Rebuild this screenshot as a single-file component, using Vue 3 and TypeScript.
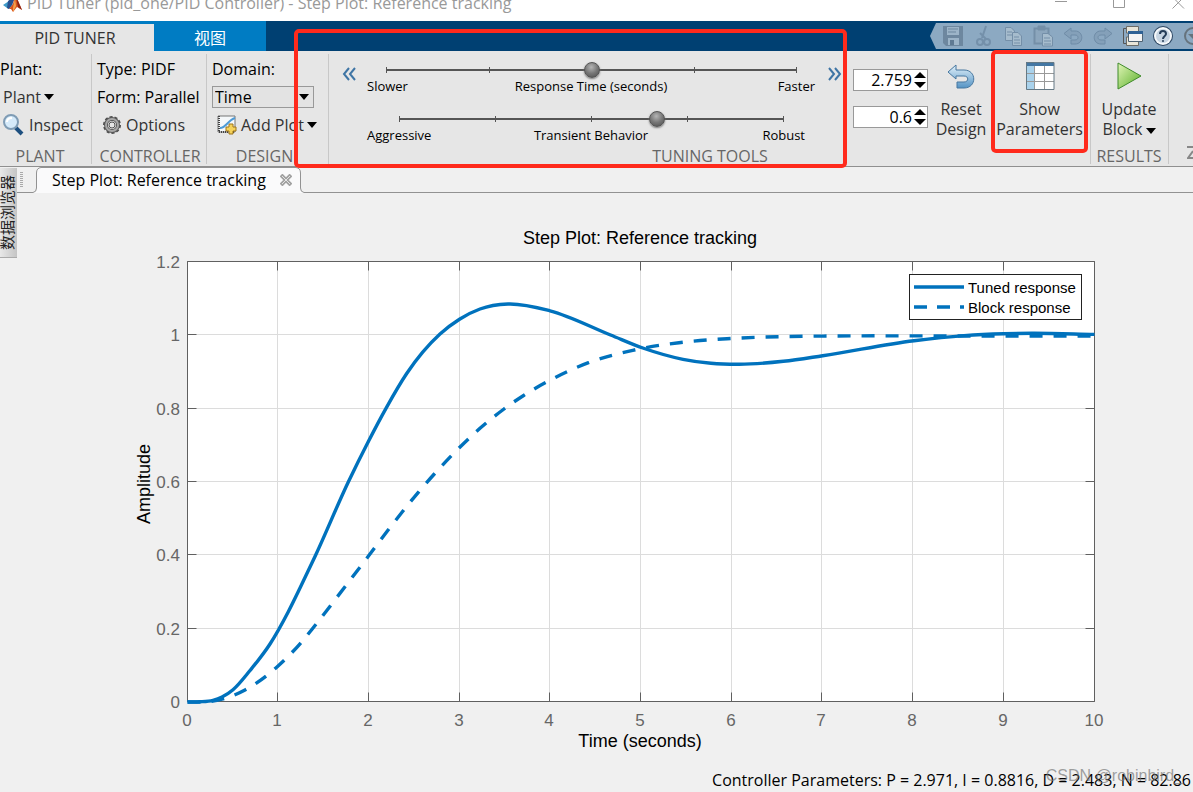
<script setup lang="ts">
import { ref } from 'vue'

type Point = [number, number]

const responseTime = ref('2.759')
const transient = ref('0.6')
const responsePos = ref(50)
const transientPos = ref(67)
const domain = ref('Time')

const axes = { left: 187, right: 1094, top: 261, bottom: 701 }
const xTicks = Array.from({ length: 11 }, (_, i) => ({
  label: String(i),
  x: Math.floor(axes.left + ((axes.right - axes.left) * i) / 10),
}))
const yTicks = ['0', '0.2', '0.4', '0.6', '0.8', '1', '1.2'].map((label, i) => ({
  label,
  y: Math.round(axes.bottom - ((axes.bottom - axes.top) * i) / 6),
}))

const tuned: Point[] = [
  [187.5, 702], [200, 701.8], [213, 700.3], [222, 697], [233, 689.7], [250, 670.5], [270, 644],
  [288.3, 611.7], [300, 588], [315, 556.5], [348.3, 482], [368.5, 441.2], [386, 408.3], [406.7, 373.5],
  [440, 334], [459.5, 319.2], [480, 309], [508, 304], [550, 310.8], [610.6, 335], [642.8, 348],
  [683, 359.3], [711, 363.3], [739, 364.3], [783.4, 361.3], [822.7, 355.7], [914, 340.7],
  [964, 335.6], [1004, 333.7], [1032, 333.3], [1094.5, 334.4],
]
const block: Point[] = [
  [187.5, 702], [210, 701.5], [222, 699.2], [245, 690], [276.7, 667.2], [300, 643.8], [315, 625.5],
  [345, 586.7], [368.3, 556.3], [388.3, 529.8], [418.3, 492.3], [434.3, 474], [459.3, 447.7],
  [480, 428.3], [504, 409], [524, 395.2], [550.4, 380], [588.5, 362.7], [632.7, 350.3],
  [679, 342.7], [727, 338.7], [779.5, 336.7], [831.6, 336], [960, 336], [1094.5, 336],
]

// Hermite interpolation; each tangent weights the two adjoining chords by distance.
function curve(points: Point[]): string {
  const last = points.length - 1
  const chord = (i: number) => (points[i + 1][1] - points[i][1]) / (points[i + 1][0] - points[i][0])
  const slope = points.map((p, i) => {
    if (i === 0) return chord(0)
    if (i === last) return chord(last - 1)
    const h0 = p[0] - points[i - 1][0]
    const h1 = points[i + 1][0] - p[0]
    return (h1 * chord(i - 1) + h0 * chord(i)) / (h0 + h1)
  })
  let d = `M${points[0][0]} ${points[0][1]}`
  for (let i = 1; i <= last; i++) {
    const [x0, y0] = points[i - 1]
    const [x1, y1] = points[i]
    const h = (x1 - x0) / 3
    d += `C${x0 + h} ${y0 + slope[i - 1] * h} ${x1 - h} ${y1 - slope[i] * h} ${x1} ${y1}`
  }
  return d
}
const tunedPath = curve(tuned)
const blockPath = curve(block)
</script>

<template>
  <div class="page">
    <header class="titlebar">
      <svg class="logo" width="20" height="13" viewBox="0 0 20 13">
        <path d="M0 5 6 1 10 4 6 9 4 8Z" fill="#3e9bc8" />
        <path d="M5 1 9-2 12-2 9 5 6 9 4 8Z" fill="#28508e" />
        <path d="M12-4 14-2 19 10 14 7 10 12 8 9 6 9 10 4Z" fill="#d9541e" />
        <path d="M13-3 15 1 19 10 15 7Z" fill="#8a2418" />
        <path d="M12-2 13 6 10 12 10 8Z" fill="#f3a14b" />
      </svg>
      <span class="title">PID Tuner (pid_one/PID Controller) - Step Plot: Reference tracking</span>
      <svg class="winbtns" width="132" height="10" viewBox="0 0 132 10" fill="none" stroke="#999">
        <path d="M2 1.500H14M60.500 -4V7.500H71.500V-4M119.500 8.500 131 -3M119.500 -3 131 8.500" />
      </svg>
    </header>

    <nav class="tabs">
      <a href="#tuner" class="tab active">PID TUNER</a>
      <a href="#view" class="tab">视图</a>
      <div class="quick">
        <svg class="point" width="8" height="26" viewBox="0 0 8 26"><path d="M8 0H6L0 13 6 26H8Z" fill="#8ca9c2" /></svg>
        <div class="quick-icons">
          <button aria-label="Save">
            <svg width="22" height="22" viewBox="0 0 22 22"><path d="M1 1H21V21H4L1 18Z" fill="#6d879f" /><path d="M5 2H17V10H5Z" fill="#9cb4c8" /><path d="M6 4H16M6 7H14" stroke="#6d879f" stroke-width="1" /><path d="M6 13H17V20H6Z" fill="#9cb4c8" /><path d="M8 15H12V20H8Z" fill="#5f7a93" /></svg>
          </button>
          <button aria-label="Cut">
            <svg width="22" height="22" viewBox="0 0 22 22" fill="none" stroke="#7490aa" stroke-width="2"><path d="M14 1 10 13M8 8 14 14" /><circle cx="8" cy="17" r="3" /><circle cx="15" cy="17" r="3" /></svg>
          </button>
          <button aria-label="Copy">
            <svg width="22" height="22" viewBox="0 0 22 22" fill="#a6bccd" stroke="#748fa8"><path d="M3.500 2.500H9L12.500 6V15.500H3.500Z" /><path d="M5 7H10M5 10H10" /><path d="M10.500 7.500H16L19.500 11V20.500H10.500Z" /><path d="M12 12H17M12 15H18M12 18H18" /></svg>
          </button>
          <button aria-label="Paste">
            <svg width="22" height="22" viewBox="0 0 22 22" fill="#a6bccd" stroke="#748fa8"><path d="M2.500 3.500H16.500V18.500H2.500Z" fill="#8ca6bd" stroke-width="2" /><path d="M6 1H13V5H6Z" fill="#748fa8" /><path d="M10.500 8.500H16L20.500 12V21H10.500Z" /><path d="M12 13H18M12 16H19M12 19H19" /></svg>
          </button>
          <button aria-label="Undo">
            <svg width="22" height="22" viewBox="0 0 22 22" fill="none" stroke="#6f8ca7"><path d="M2 8.500 9 3V6H13C22 6 22 19 13 19H9V15H13C17 15 17 10 13 10H9V14Z" stroke-width="1" fill="#84a0b9" /></svg>
          </button>
          <button aria-label="Redo">
            <svg width="22" height="22" viewBox="0 0 22 22" fill="none" stroke="#6f8ca7"><path d="M20 8.500 13 3V6H9C0 6 0 19 9 19H13V15H9C5 15 5 10 9 10H13V14Z" stroke-width="1" fill="#84a0b9" /></svg>
          </button>
          <button aria-label="Switch windows">
            <svg width="22" height="22" viewBox="0 0 22 22"><path d="M4.500 1.500H16.500V8H4.500ZM4.500 12H16.500V20.500H4.500Z" fill="#e9e5d8" stroke="#6b6b66" /><path d="M4 3.500H1.500V18.500H4" fill="none" stroke="#555" /><path d="M6.500 6.500H20.500V16.500H6.500Z" fill="#f4f4f4" stroke="#4f6272" /><path d="M6 6H21V9H6Z" fill="#2f6295" /></svg>
          </button>
          <button aria-label="Help">
            <svg width="22" height="22" viewBox="0 0 22 22"><circle cx="11" cy="11" r="10" fill="#2d4763" /><circle cx="11" cy="11" r="9" fill="#f6f9fb" /><circle cx="11" cy="11" r="7" fill="#c7d5e2" /><path d="M8 9C8 5 14 5 14 9 14 11 11 11 11 14" fill="none" stroke="#263e59" stroke-width="2" /><circle cx="11" cy="16" r="1" fill="#263e59" /></svg>
          </button>
          <button aria-label="More">
            <svg width="22" height="22" viewBox="0 0 22 22"><circle cx="11" cy="11" r="8" fill="none" stroke="#66737d" stroke-width="2" /><path d="M6 9H16L11 14Z" fill="#66737d" /></svg>
          </button>
        </div>
      </div>
    </nav>

    <section class="ribbon">
      <div class="group plant">
        <div class="rows">
          <div class="row dark">Plant:</div>
          <button class="row indent">Plant<i class="caret"></i></button>
          <button class="row indent">
            <svg width="22" height="22" viewBox="0 0 22 22"><path d="M12 13 19 20" stroke="#1d4f7f" stroke-width="4" /><circle cx="8" cy="8" r="7" fill="#d5eafa" stroke="#7f9cb5" stroke-width="2" /><path d="M4 8C4 5 6 4 9 4" fill="none" stroke="#fff" stroke-width="2" /></svg>
            <span>Inspect</span>
          </button>
        </div>
        <h2>PLANT</h2>
      </div>
      <div class="group controller">
        <div class="rows">
          <div class="row dark">Type: PIDF</div>
          <div class="row dark">Form: Parallel</div>
          <button class="row icon-row">
            <svg width="20" height="20" viewBox="0 0 20 20"><circle cx="10" cy="10" r="8" fill="none" stroke="#4c4c4c" stroke-width="2" stroke-dasharray="3 2" /><circle cx="10" cy="10" r="6" fill="none" stroke="#5a5a5a" stroke-width="4" /><circle cx="10" cy="10" r="6" fill="none" stroke="#a8a8a8" stroke-width="2" /><circle cx="10" cy="10" r="3" fill="#e6e6e6" stroke="#555" stroke-width="1" /></svg>
            <span>Options</span>
          </button>
        </div>
        <h2>CONTROLLER</h2>
      </div>
      <div class="group design">
        <div class="rows">
          <label class="row dark" for="domain">Domain:</label>
          <div class="row select-row">
            <select id="domain" v-model="domain"><option>Time</option><option>Frequency</option></select>
            <i class="caret"></i>
          </div>
          <button class="row icon-row">
            <svg width="20" height="20" viewBox="0 0 20 20"><path d="M1 1H18V17H1Z" fill="#f5f8fa" stroke="#777" /><path d="M2 1V17H18" fill="none" stroke="#444" stroke-width="2" stroke-dasharray="1 1" /><path d="M3 13C9 13 11 5 18 3" fill="none" stroke="#4d9ad6" stroke-width="2" /><path d="M12 9H16V12H19V16H16V19H12V16H9V12H12Z" fill="#f5d25a" stroke="#9d7418" /></svg>
            <span>Add Plot</span><i class="caret"></i>
          </button>
        </div>
        <h2>DESIGN</h2>
      </div>
      <div class="group tuning">
        <div class="tools">
          <button class="chev" aria-label="Shift range slower">
            <svg width="14" height="14" viewBox="0 0 14 14" fill="none" stroke="#3f75a5" stroke-width="2"><path d="M7 1 2 7 7 13M13 1 8 7 13 13" /></svg>
          </button>
          <div class="sliders">
            <div class="slider first">
              <div class="track">
                <div class="ticks"><i v-for="n in 5" :key="n"></i></div>
                <input v-model="responsePos" type="range" min="0" max="100" aria-label="Response Time (seconds)" />
              </div>
              <div class="labels"><span>Slower</span><span>Response Time (seconds)</span><span>Faster</span></div>
            </div>
            <div class="slider second">
              <div class="track">
                <div class="ticks"><i v-for="n in 5" :key="n"></i></div>
                <input v-model="transientPos" type="range" min="0" max="100" aria-label="Transient Behavior" />
              </div>
              <div class="labels"><span>Aggressive</span><span>Transient Behavior</span><span>Robust</span></div>
            </div>
          </div>
          <button class="chev" aria-label="Shift range faster">
            <svg width="14" height="14" viewBox="0 0 14 14" fill="none" stroke="#3f75a5" stroke-width="2"><path d="M1 1 6 7 1 13M7 1 12 7 7 13" /></svg>
          </button>
          <div class="spinners">
            <div class="spinner">
              <input v-model="responseTime" type="text" aria-label="Response time" />
              <div class="arrows"><button class="up" aria-label="Increase response time"></button><button class="down" aria-label="Decrease response time"></button></div>
            </div>
            <div class="spinner">
              <input v-model="transient" type="text" aria-label="Transient behavior value" />
              <div class="arrows"><button class="up" aria-label="Increase transient behavior"></button><button class="down" aria-label="Decrease transient behavior"></button></div>
            </div>
          </div>
          <button class="big reset">
            <svg width="30" height="30" viewBox="0 0 30 30"><defs><linearGradient id="arrow" x2="0" y2="1"><stop stop-color="#e4f3fc" /><stop offset="1" stop-color="#5493c4" /></linearGradient></defs><path d="M2 11 10 4V9H18C31 9 31 27 18 27H11V21H18C23 21 23 15 18 15H10V18Z" fill="url(#arrow)" stroke="#47779f" stroke-width="1" /></svg>
            <span>Reset</span><span>Design</span>
          </button>
          <button class="big params">
            <svg width="30" height="30" viewBox="0 0 30 30"><path d="M1 2H29V29H1Z" fill="#fff" /><path d="M1 5H9V29H1Z" fill="#a9d2ec" /><path d="M1 1H29V5H1Z" fill="#4477a3" /><path d="M9.500 5V28M19.500 5V28M1 12.500H29M1 20.500H29" stroke="#999" /><path d="M1.500 1.500H29V28.500H1.500Z" fill="none" stroke="#657985" /></svg>
            <span>Show</span><span>Parameters</span>
          </button>
        </div>
        <h2>TUNING TOOLS</h2>
      </div>
      <div class="group results">
        <div class="tools">
          <button class="big">
            <svg width="30" height="30" viewBox="0 0 30 30"><defs><linearGradient id="play" x2="1" y2="1"><stop stop-color="#e2f6b8" /><stop offset="1" stop-color="#58ae27" /></linearGradient></defs><path d="M4 2 27 15 4 28Z" fill="url(#play)" stroke="#3f8a2b" stroke-width="1" stroke-linejoin="round" /></svg>
            <span>Update</span><span>Block<i class="caret"></i></span>
          </button>
        </div>
        <h2>RESULTS</h2>
      </div>
      <div class="rest">
        <svg width="6" height="14" viewBox="0 0 6 14"><path d="M0 1H6M6 5 1 12H6" fill="none" stroke="#888" stroke-width="2" /></svg>
      </div>
    </section>
    <div class="mark mark-tuning"></div>

    <main class="workspace">
      <button class="side"><span>数据浏览器</span></button>
      <div class="document">
        <div class="doc-tabs">
          <div class="grip"><i></i></div>
          <svg width="8" height="26" viewBox="0 0 8 26"><path d="M0 25.500Q3.500 25 3.500 21V6Q3.500 1 8 .5V26H0Z" fill="#fafafb" /><path d="M0 25.500Q3.500 25 3.500 21V6Q3.500 1 8 .5" fill="none" stroke="#929292" /></svg>
          <div class="doc-tab">
            <span>Step Plot: Reference tracking</span>
            <button aria-label="Close">
              <svg width="12" height="12" viewBox="0 0 12 12"><path d="M1 1 11 11M11 1 1 11" stroke="#a2a2a2" stroke-width="4" /><path d="M2 2 10 10M10 2 2 10" stroke="#e4e4e4" stroke-width="1" /></svg>
            </button>
          </div>
          <svg width="8" height="26" viewBox="0 0 8 26"><path d="M8 25.500Q4.500 25 4.500 21V6Q4.500 1 0 .5V26H8Z" fill="#fafafb" /><path d="M8 25.500Q4.500 25 4.500 21V6Q4.500 1 0 .5" fill="none" stroke="#929292" /></svg>
          <div class="filler"></div>
        </div>

        <svg class="chart" viewBox="17 193 1176 576" role="img" aria-label="Step plot of tuned and block response">
          <rect x="187" y="261" width="908" height="441" fill="#fff" />
          <g transform="translate(.5 .5)">
            <g class="grid">
              <path v-for="t in xTicks" :key="'gx' + t.label" :d="`M${t.x} 261V701`" />
              <path v-for="t in yTicks" :key="'gy' + t.label" :d="`M187 ${t.y}H1094`" />
            </g>
            <g class="axis">
              <path v-for="t in xTicks" :key="'ax' + t.label" :d="`M${t.x} 261V270M${t.x} 701V692`" />
              <path v-for="t in yTicks" :key="'ay' + t.label" :d="`M187 ${t.y}H196M1094 ${t.y}H1085`" />
              <path d="M187 261H1094V701H187Z" />
            </g>
          </g>
          <path class="line dashed" :d="blockPath" />
          <path class="line" :d="tunedPath" />
          <g class="tick-text">
            <text v-for="t in xTicks" :key="'tx' + t.label" :x="t.x" y="726" text-anchor="middle">{{ t.label }}</text>
            <text v-for="t in yTicks" :key="'ty' + t.label" x="180" :y="t.y + 7" text-anchor="end">{{ t.label }}</text>
          </g>
          <text class="heading" x="640" y="244" text-anchor="middle">Step Plot: Reference tracking</text>
          <text class="heading" x="640" y="747" text-anchor="middle">Time (seconds)</text>
          <text class="heading" transform="translate(150 484) rotate(-90)" text-anchor="middle">Amplitude</text>
          <rect class="legend" x="909" y="274" width="172" height="45" />
          <path class="line" d="M914 287H964" />
          <path class="line legend-dash" d="M914 307H964" />
          <text class="legend-text" x="968" y="293">Tuned response</text>
          <text class="legend-text" x="968" y="313">Block response</text>
        </svg>
      </div>
    </main>
    <footer class="status">
      <span>Controller Parameters: P = 2.971, I = 0.8816, D = 2.483, N = 82.86</span>
      <span class="watermark">CSDN @robinbird_</span>
    </footer>
  </div>
</template>

<style>
body { margin: 0; background: #f0f0f0; }
</style>

<style scoped>
.page { position: relative; min-height: 100vh; overflow: hidden; display: flex; flex-direction: column; background: #f0f0f0; color: #333; font: 16px/20px "Open Sans", "Noto Sans CJK SC", sans-serif; }
* { box-sizing: border-box; }
svg { display: block; flex: none; }
button { border: 0; padding: 0; margin: 0; background: none; font: inherit; color: inherit; }
.titlebar { height: 21px; background: #fff; display: flex; align-items: flex-start; padding: 0 8px 0 3px; overflow: hidden; }
.title { margin-left: 4px; line-height: 6px; color: #999; white-space: nowrap; }
.winbtns { margin-left: auto; }
.tabs { height: 30px; display: flex; background: #004072; }
.tab { width: 112px; display: flex; align-items: center; justify-content: center; padding-top: 4px; background: #007cc3; color: #fff; text-decoration: none; }
.tab.active { width: 154px; padding: 3px 4px 0 0; color: #333; background: linear-gradient(#007cc3 3px, #e6e6e6 3px); }
.quick { margin-left: auto; padding-top: 2px; display: flex; width: 263px; overflow: hidden; }
.quick-icons { height: 26px; flex: 1; display: flex; background: #8ca9c2; overflow: hidden; }
.quick-icons button { flex: none; width: 30px; display: grid; place-items: center; }
.ribbon { height: 116px; display: flex; background: #e6e6e6; border-bottom: 1px solid #8f8f8f; }
.group { position: relative; display: flex; flex-direction: column; background: linear-gradient(#c8c8c8, #c8c8c8) right 0 top 3px / 1px 110px no-repeat; }
.plant { width: 92px; }
.controller { width: 115px; padding-left: 5px; }
.design { width: 122px; padding-left: 5px; }
.tuning { flex: 1; }
.results { width: 78px; }
.rest { width: 24px; padding-top: 95px; display: flex; justify-content: flex-end; }
h2 { flex: none; height: 20px; margin: auto 0 0; font-size: 16px; line-height: 20px; font-weight: 400; color: #666; text-align: center; white-space: nowrap; }
.plant h2 { padding-right: 12px; }
.controller h2 { margin-left: -4px; }
.design h2 { padding-right: 12px; }
.results h2 { padding-right: 2px; }
.rows { padding-top: 4px; }
.row { height: 28px; width: 100%; display: flex; align-items: center; white-space: nowrap; }
.row.dark { color: #000; }
.row.indent { padding-left: 3px; }
.row svg + span { margin-left: 4px; }
.icon-row { padding-left: 5px; }
.caret { flex: none; display: inline-block; border: 5px solid transparent; border-top: 6px solid #000; border-bottom: 0; margin-left: 3px; vertical-align: middle; }
.select-row { position: relative; width: 102px; }
select { appearance: none; width: 102px; height: 22px; padding: 0 2px; border: 1px solid #999; border-radius: 0; background: #e3e3e3; color: #000; font: inherit; line-height: 18px; }
.select-row .caret { position: absolute; right: 5px; pointer-events: none; }
.tools { display: flex; flex: 1; min-height: 0; align-items: flex-start; }
.chev { width: 14px; height: 14px; margin-top: 16px; }
.tuning .tools { padding: 0 3px 0 13px; }
.sliders { flex: 1; min-width: 0; margin: 0 13px 0 11px; padding-top: 10px; }
.slider { height: 49px; }
.track { position: relative; height: 18px; margin: 0 18px 0 19px; }
.second .track { margin: 0 31px 0 32px; }
.ticks { height: 18px; display: flex; justify-content: space-between; align-items: center; background: linear-gradient(#555, #555) 0 8px / 100% 2px no-repeat; }
.ticks i { width: 1px; height: 6px; background: #555; }
.track input { position: absolute; left: -8px; top: 0; width: calc(100% + 16px); height: 18px; margin: 0; appearance: none; background: none; }
.track input::-webkit-slider-thumb { appearance: none; width: 16px; height: 16px; border-radius: 50%; border: 1px solid #555; background: radial-gradient(circle at 45% 30%, #b5b5b5, #777 50%, #4c4c4c); box-shadow: 0 1px 2px #777; }
.labels { display: grid; grid-template-columns: 1fr auto 1fr; font-size: 13px; line-height: 14px; color: #000; }
.labels span:last-child { text-align: right; }
.second .labels span:last-child { padding-right: 10px; }
.spinners { width: 75px; margin: 18px 8px 0 11px; display: flex; flex-direction: column; gap: 15px; }
.spinner { height: 22px; display: flex; border: 1px solid #999; background: #fff; }
.spinner input { flex: 1; min-width: 0; border: 0; padding: 0 2px 0 0; background: none; text-align: right; font: inherit; color: #000; }
.arrows { width: 13px; display: flex; flex-direction: column; justify-content: center; gap: 4px; }
.up, .down { width: 0; height: 0; border: 6px solid transparent; }
.up { border-top: 0; border-bottom: 6px solid #000; }
.down { border-bottom: 0; border-top: 6px solid #000; }
.big { position: relative; padding-top: 10px; display: flex; flex-direction: column; align-items: center; white-space: nowrap; }
.big svg { margin-bottom: 8px; }
.reset { width: 50px; }
.params { width: 97px; height: 103px; margin: -1px 0 0 5px; padding-top: 11px; border-radius: 5px; box-shadow: inset 0 0 0 4px #ff2a1c; }
.results .big { width: 100%; padding-right: 2px; }
.mark { position: absolute; border: 4px solid #ff2a1c; border-radius: 5px; pointer-events: none; }
.mark-tuning { left: 294px; right: 346px; top: 29px; height: 139px; z-index: 2; }
.workspace { display: flex; align-items: flex-start; }
.side { width: 17px; height: 90px; margin-top: 1px; flex: none; display: flex; align-items: center; justify-content: flex-start; overflow: hidden; background: linear-gradient(90deg, #e8e8e8, #c4c4c4); border-bottom: 1px solid #aaa; }
.side span { writing-mode: vertical-rl; text-orientation: sideways; transform: rotate(180deg); font-size: 15px; line-height: 14px; white-space: nowrap; color: #222; }
.document { flex: 1; min-width: 0; }
.doc-tabs { height: 26px; display: flex; }
.grip { width: 16px; border-bottom: 1px solid #929292; padding: 5px 0 0 3px; }
.grip i { display: block; width: 3px; height: 15px; background: repeating-linear-gradient(#aaa 0 1px, transparent 1px 2px); }
.doc-tab { width: 255px; display: flex; align-items: center; justify-content: space-between; padding: 0 4px 2px 11px; border-top: 1px solid #929292; background: #fafafb; color: #000; white-space: nowrap; }
.filler { flex: 1; border-bottom: 1px solid #929292; }
.chart { width: 100%; height: auto; font-family: "Liberation Sans", Arial, sans-serif; }
.grid path { stroke: #dcdcdc; stroke-width: 1; }
.axis path { fill: none; stroke: #606060; stroke-width: 1; }
.line { fill: none; stroke: #0072bd; stroke-width: 3.4; }
.dashed { stroke-dasharray: 13 11; }
.legend-dash { stroke-dasharray: 13 10; }
.tick-text { fill: #666; font-size: 17px; }
.heading { fill: #000; font-size: 18px; }
.legend { fill: #fff; stroke: #222; shape-rendering: crispEdges; }
.legend-text { fill: #000; font-size: 15px; }
.status { position: relative; height: 23px; padding-right: 2px; text-align: right; color: #000; line-height: 23px; white-space: nowrap; }
.watermark { position: absolute; right: 10px; bottom: 6px; line-height: 20px; color: rgba(120, 120, 120, 0.7); font-family: "Liberation Sans", Arial, sans-serif; }
</style>
